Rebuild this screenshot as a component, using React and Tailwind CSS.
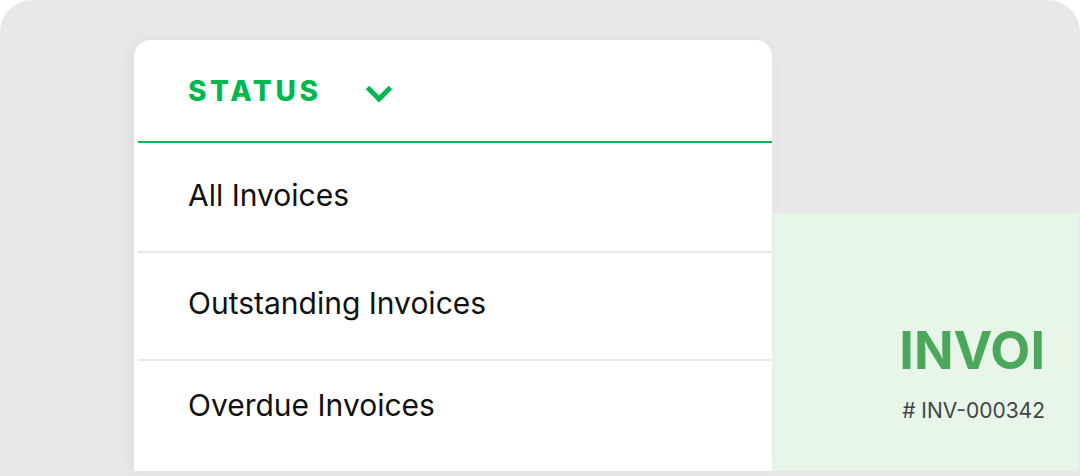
import React from 'react';

const items = [
  { label: 'All Invoices', row: 'h-[110px] pt-[36px]' },
  { label: 'Outstanding Invoices', row: 'h-[108px] pt-[34px]' },
  { label: 'Overdue Invoices', row: 'flex-1 pt-[28px]' },
];

const Chevron = () => (
  <svg width="30" height="22" viewBox="0 0 30 22" fill="none" className="block">
    <path d="M3.5 4.5 L15 16 L26.5 4.5" stroke="#00b84f" strokeWidth="5" strokeLinecap="butt" strokeLinejoin="miter" />
  </svg>
);

const App = () => {
  return (
    <div className="w-[1080px] h-[476px] bg-white overflow-hidden" style={{ fontFamily: 'Inter, "Liberation Sans", sans-serif' }}>
      <div className="h-full bg-[#e8e8e8] rounded-t-[32px] flex items-end pl-[134px] pb-[5px] pt-[40px]">
        {/* dropdown card */}
        <div className="w-[638px] h-full bg-white rounded-t-[16px] shadow-[-4px_0_14px_rgba(0,0,0,0.05)] flex flex-col relative z-10">
          <div className="h-[101px] flex items-center pl-[54px]">
            <span className="text-[28px] leading-none font-extrabold tracking-[0.13em] text-[#00b84f]">STATUS</span>
            <span className="ml-[42px] mt-[6px]"><Chevron /></span>
          </div>
          <div className="ml-[4px] h-[2px] bg-[#00b84f]" />
          <div className="ml-[4px] flex-1 flex flex-col">
            {items.map((item, i) => (
              <div key={i} className={`${item.row} ${i < 2 ? 'border-b-2 border-[#ebe7e9]' : ''} pl-[50px]`}>
                <span className="block text-[30px] leading-[32px] text-[#111]">{item.label}</span>
              </div>
            ))}
          </div>
        </div>
        {/* invoice preview peeking out */}
        <div className="w-[307px] h-[258px] bg-[#e8f6ea] rounded-br-[6px] flex flex-col items-end pr-[34px] pt-[112px]">
          <span className="text-[52px] leading-none font-bold text-[#4ca75b]">INVOI</span>
          <span className="mt-[23px] text-[21px] leading-none text-[#444]"># INV-000342</span>
        </div>
      </div>
    </div>
  );
};

export default App;
